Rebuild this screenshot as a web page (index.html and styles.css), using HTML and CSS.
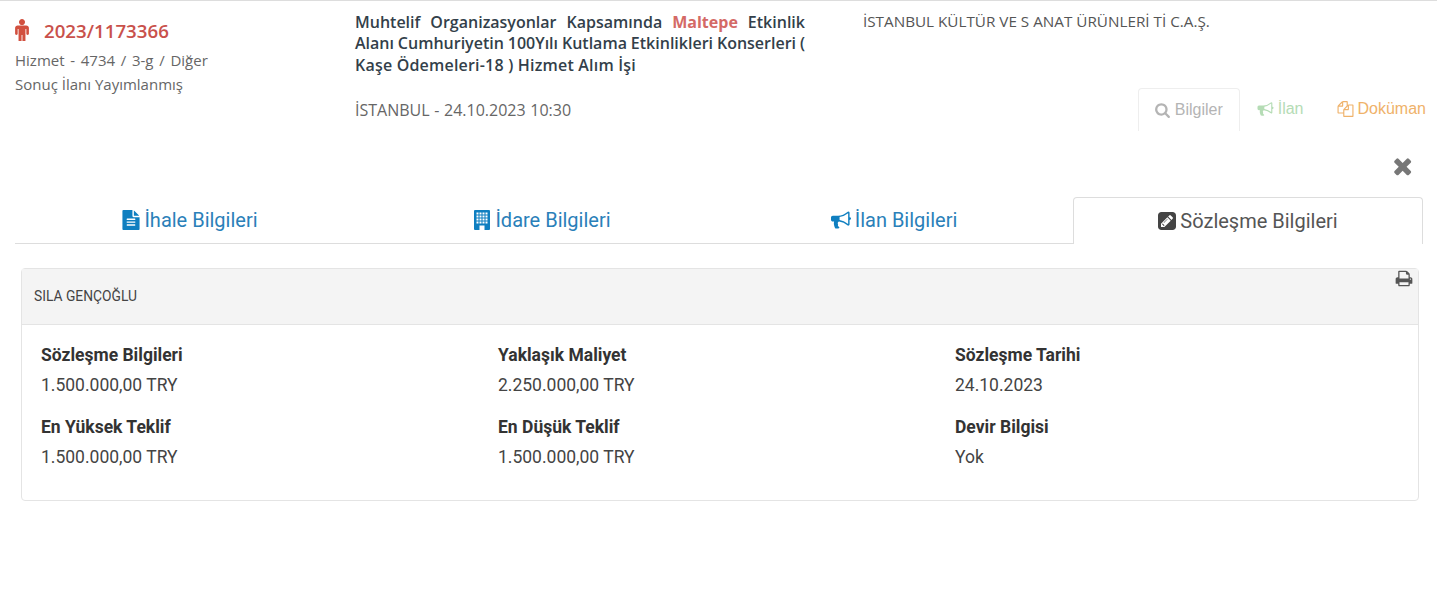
FILE: index.html
```html
<!DOCTYPE html>
<html lang="tr">
<head>
    <meta charset="UTF-8">
    <meta name="viewport" content="width=device-width, initial-scale=1.0">
    <title>Sözleşme Bilgileri</title>
    <link rel="stylesheet" href="styles.css">
</head>
<body>
    <div class="tender-row">
        <div class="tender-id">
            <div class="tender-no">
                <svg class="icon-male" viewBox="0 160 1024 1632"><path fill="currentColor" d="M1024 832v416q0 40-28 68t-68 28-68-28-28-68v-352h-64v912q0 46-33 79t-79 33-79-33-33-79v-464h-64v464q0 46-33 79t-79 33-79-33-33-79v-912h-64v352q0 40-28 68t-68 28-68-28-28-68v-416q0-80 56-136t136-56h640q80 0 136 56t56 136zm-288-448q0 93-65.5 158.5t-158.5 65.5-158.5-65.5-65.5-158.5 65.5-158.5 158.5-65.5 158.5 65.5 65.5 158.5z"/></svg>
                <span>2023/1173366</span>
            </div>
            <div class="tender-meta tender-type">Hizmet - 4734 / 3-g / Diğer</div>
            <div class="tender-meta">Sonuç İlanı Yayımlanmış</div>
        </div>
        <div class="tender-main">
            <p class="tender-title">Muhtelif Organizasyonlar Kapsamında <b>Maltepe</b> Etkinlik <span class="title-tight">Alanı Cumhuriyetin 100Yılı Kutlama Etkinlikleri Konserleri (</span> <span class="title-tail">Kaşe Ödemeleri-18 ) Hizmet Alım İşi</span></p>
            <div class="tender-place">İSTANBUL - 24.10.2023 10:30</div>
        </div>
        <div class="tender-side">
            <div class="tender-org">İSTANBUL KÜLTÜR VE S ANAT ÜRÜNLERİ Tİ C.A.Ş.</div>
            <div class="mini-tabs">
                <a class="mini-tab active">
                    <svg class="icon" viewBox="0 0 1792 1792"><path fill="currentColor" d="M1216 832q0-185-131.5-316.5t-316.5-131.5-316.5 131.5-131.5 316.5 131.5 316.5 316.5 131.5 316.5-131.5 131.5-316.5zm512 832q0 52-38 90t-90 38q-54 0-90-38l-343-342q-179 124-399 124-143 0-273.5-55.5t-225-150-150-225-55.5-273.5 55.5-273.5 150-225 225-150 273.5-55.5 273.5 55.5 225 150 150 225 55.5 273.5q0 220-124 399l343 343q37 37 37 90z"/></svg>
                    Bilgiler
                </a>
                <a class="mini-tab green">
                    <svg class="icon" viewBox="0 0 1792 1792"><path fill="currentColor" d="M1664 640q53 0 90.5 37.5t37.5 90.5-37.5 90.5-90.5 37.5v384q0 52-38 90t-90 38q-417-347-812-380-58 19-91 66t-31 100.5 40 92.5q-20 33-23 65.5t6 58 33.5 55 48 50 61.5 50.5q-29 58-111.5 83t-168.5 11.5-132-55.5q-7-23-29.5-87.5t-32-94.5-23-89-15-101 3.5-98.5 22-110.5h-122q-66 0-113-47t-47-113v-192q0-66 47-113t113-47h480q435 0 896-384 52 0 90 38t38 90v384zm-128 604v-954q-394 302-768 343v270q377 42 768 341z"/></svg>
                    İlan
                </a>
                <a class="mini-tab orange">
                    <svg class="icon" viewBox="0 0 1792 1792"><path fill="currentColor" d="M1696 384q40 0 68 28t28 68v1216q0 40-28 68t-68 28h-960q-40 0-68-28t-28-68v-288h-544q-40 0-68-28t-28-68v-672q0-40 20-88t48-76l408-408q28-28 76-48t88-20h416q40 0 68 28t28 68v328q68-40 128-40h416zm-544 213l-299 299h299v-299zm-640-384l-299 299h299v-299zm196 647l316-316v-416h-384v416q0 40-28 68t-68 28h-416v640h512v-256q0-40 20-88t48-76zm956 804v-1152h-384v416q0 40-28 68t-68 28h-416v640h896z"/></svg>
                    Doküman
                </a>
            </div>
        </div>
    </div>

    <div class="close-row">
        <svg class="icon-close" viewBox="200 200 1300 1400"><path fill="currentColor" d="M1490 1322q0 40-28 68l-136 136q-28 28-68 28t-68-28l-294-294-294 294q-28 28-68 28t-68-28l-136-136q-28-28-28-68t28-68l294-294-294-294q-28-28-28-68t28-68l136-136q28-28 68-28t68 28l294 294 294-294q28-28 68-28t68 28l136 136q28 28 28 68t-28 68l-294 294 294 294q28 28 28 68z"/></svg>
    </div>

    <div class="tabs">
        <a class="tab">
            <svg class="icon" viewBox="128 0 1536 1792"><path fill="currentColor" d="M1596 476q14 14 28 36h-472v-472q22 14 36 28zm-476 164h544v1056q0 40-28 68t-68 28h-1344q-40 0-68-28t-28-68v-1600q0-40 28-68t68-28h800v544q0 40 28 68t68 28zm160 736v-64q0-14-9-23t-23-9h-704q-14 0-23 9t-9 23v64q0 14 9 23t23 9h704q14 0 23-9t9-23zm0-256v-64q0-14-9-23t-23-9h-704q-14 0-23 9t-9 23v64q0 14 9 23t23 9h704q14 0 23-9t9-23zm0-256v-64q0-14-9-23t-23-9h-704q-14 0-23 9t-9 23v64q0 14 9 23t23 9h704q14 0 23-9t9-23z"/></svg>
            İhale Bilgileri
        </a>
        <a class="tab">
            <svg class="icon" viewBox="0 0 16 20">
                <path fill="currentColor" d="M1 0h14a1 1 0 0 1 1 1v18a1 1 0 0 1-1 1H1a1 1 0 0 1-1-1V1a1 1 0 0 1 1-1z"/>
                <path fill="#fff" d="M2.500 2.500h2v2h-2zM5.500 2.500h2v2h-2zM8.500 2.500h2v2h-2zM11.500 2.500h2v2h-2zM2.500 5.500h2v2h-2zM5.500 5.500h2v2h-2zM8.500 5.500h2v2h-2zM11.500 5.500h2v2h-2zM2.500 8.500h2v2h-2zM5.500 8.500h2v2h-2zM8.500 8.500h2v2h-2zM11.500 8.500h2v2h-2zM2.500 11.500h2v2h-2zM5.500 11.500h2v2h-2zM8.500 11.500h2v2h-2zM11.500 11.500h2v2h-2zM5.500 15.500h5v4.500h-5z"/>
            </svg>
            İdare Bilgileri
        </a>
        <a class="tab">
            <svg class="icon icon-wide" viewBox="0 0 1792 1792"><path fill="currentColor" d="M1664 640q53 0 90.5 37.5t37.5 90.5-37.5 90.5-90.5 37.5v384q0 52-38 90t-90 38q-417-347-812-380-58 19-91 66t-31 100.5 40 92.5q-20 33-23 65.5t6 58 33.5 55 48 50 61.5 50.5q-29 58-111.5 83t-168.5 11.5-132-55.5q-7-23-29.5-87.5t-32-94.5-23-89-15-101 3.5-98.5 22-110.5h-122q-66 0-113-47t-47-113v-192q0-66 47-113t113-47h480q435 0 896-384 52 0 90 38t38 90v384zm-128 604v-954q-394 302-768 343v270q377 42 768 341z"/></svg>
            İlan Bilgileri
        </a>
        <a class="tab active">
            <svg class="icon" viewBox="0 0 1536 1536"><path fill="currentColor" d="M404 980l152 152-52 52h-56v-96h-96v-56zm414-390q14 13-3 30l-291 291q-17 17-30 3-14-13 3-30l291-291q17-17 30-3zm-274 690l544-544-288-288-544 544v288h288zm608-608l92-92q28-28 28-68t-28-68l-152-152q-28-28-68-28t-68 28l-92 92zm384-384v960q0 119-84.500 203.500t-203.500 84.500h-960q-119 0-203.500-84.500t-84.500-203.500v-960q0-119 84.500-203.500t203.500-84.500h960q119 0 203.500 84.500t84.500 203.500z"/></svg>
            Sözleşme Bilgileri
        </a>
    </div>

    <div class="card">
        <div class="card-head">
            <span>SILA GENÇOĞLU</span>
            <svg class="icon-print" viewBox="0 128 1792 1536"><path fill="currentColor" d="M448 1536h896v-256h-896v256zm0-640h896v-384h-160q-40 0-68-28t-28-68v-160h-640v640zm1152 64q0-26-19-45t-45-19-45 19-19 45 19 45 45 19 45-19 19-45zm128 0v416q0 13-9.500 22.500t-22.500 9.500h-224v160q0 40-28 68t-68 28h-960q-40 0-68-28t-28-68v-160h-224q-13 0-22.500-9.500t-9.500-22.500v-416q0-79 56.500-135.500t135.500-56.500h64v-544q0-40 28-68t68-28h672q40 0 88 20t76 48l152 152q28 28 48 76t20 88v256h64q79 0 135.500 56.500t56.500 135.500z"/></svg>
        </div>
        <div class="card-body">
            <div class="field"><div class="field-label">Sözleşme Bilgileri</div><div class="field-value">1.500.000,00 TRY</div></div>
            <div class="field"><div class="field-label">Yaklaşık Maliyet</div><div class="field-value">2.250.000,00 TRY</div></div>
            <div class="field"><div class="field-label">Sözleşme Tarihi</div><div class="field-value">24.10.2023</div></div>
            <div class="field"><div class="field-label">En Yüksek Teklif</div><div class="field-value">1.500.000,00 TRY</div></div>
            <div class="field"><div class="field-label">En Düşük Teklif</div><div class="field-value">1.500.000,00 TRY</div></div>
            <div class="field"><div class="field-label">Devir Bilgisi</div><div class="field-value">Yok</div></div>
        </div>
    </div>
</body>
</html>
```

FILE: styles.css
```css
body {
    margin: 0;
    background: #fff;
    font-family: "Open Sans", sans-serif;
    color: #333;
    border-top: 1px solid #ddd;
}
.tender-row {
    display: grid;
    grid-template-columns: 340px 450px 1fr;
    padding: 0 11px 0 15px;
    height: 130px;
}
.tender-no {
    display: flex;
    align-items: center;
    gap: 15px;
    margin-top: 16px;
    height: 26px;
    font-size: 18.7px;
    font-weight: 600;
    color: #c9514b;
}
.icon-male {
    width: 14px;
    height: 22px;
    color: #d2503f;
}
.tender-meta {
    font-size: 15px;
    line-height: 24px;
    color: #666;
}
.tender-type {
    margin-top: 5px;
    word-spacing: 1.8px;
}
.tender-title {
    margin: 10.5px 0 0;
    font-size: 16px;
    font-weight: 600;
    line-height: 21.5px;
    color: #333f4a;
    text-align: justify;
}
.tender-title b {
    font-weight: 700;
    color: #d46a66;
}
.title-tight {
    word-spacing: -1.5px;
}
.title-tail {
    letter-spacing: 0.2px;
}
.tender-place {
    margin-top: 22px;
    font-size: 16px;
    line-height: 24px;
    word-spacing: 0.5px;
    color: #666;
}
.tender-side {
    padding-left: 58px;
    display: flex;
    flex-direction: column;
}
.tender-org {
    margin-top: 10px;
    font-size: 15.25px;
    line-height: 20px;
    color: #555;
}
.mini-tabs {
    display: flex;
    justify-content: flex-end;
    margin-top: 57px;
    font-family: "Liberation Sans", sans-serif;
    font-size: 16px;
}
.mini-tab {
    display: flex;
    align-items: center;
    gap: 4px;
    height: 42px;
    padding: 0 16px;
}
.mini-tab.active {
    border: 1px solid #eee;
    border-bottom: none;
    border-radius: 4px 4px 0 0;
    padding-left: 15px;
    color: #b4b4b4;
}
.mini-tab.green {
    color: #b5dcb5;
    padding: 0 17px;
}
.mini-tab.orange {
    color: #efb26a;
    padding: 0 0 0 16px;
}
.icon {
    width: 17px;
    height: 16px;
    flex: none;
}
.close-row {
    display: flex;
    justify-content: flex-end;
    padding: 25px 25px 0 0;
    height: 41px;
}
.icon-close {
    width: 20px;
    height: 20px;
    color: #777;
}
.tabs {
    display: grid;
    grid-template-columns: repeat(4, 1fr);
    margin: 0 14px 0 15px;
    height: 46px;
    border-bottom: 1px solid #ddd;
    font-family: Roboto, sans-serif;
    font-size: 20px;
}
.tab {
    display: flex;
    align-items: center;
    justify-content: center;
    gap: 4px;
    height: 46px;
    padding-right: 2px;
    color: #2a80b9;
}
.tab .icon {
    width: 18px;
    height: 20px;
    color: #0f7fc0;
}
.tab .icon-wide {
    width: 20px;
}
.tab.active {
    box-sizing: border-box;
    height: 47px;
    border: 1px solid #ddd;
    border-bottom: none;
    border-radius: 4px 4px 0 0;
    background: #fff;
    color: #555;
    margin-left: 2px;
    padding-right: 0;
}
.tab.active .icon {
    color: #444;
}
.card {
    margin: 24px 18px 0 21px;
    border: 1px solid #e4e4e4;
    border-radius: 4px;
    font-family: Roboto, sans-serif;
}
.card-head {
    position: relative;
    display: flex;
    align-items: center;
    box-sizing: border-box;
    height: 56px;
    padding: 0 0 1px 12px;
    background: #f4f4f4;
    border-bottom: 1px solid #e4e4e4;
    font-size: 13.8px;
    color: #444;
}
.icon-print {
    position: absolute;
    top: 1px;
    right: 5px;
    width: 18px;
    height: 17px;
    color: #555;
}
.card-body {
    display: grid;
    grid-template-columns: repeat(3, 457px);
    row-gap: 11px;
    padding: 15px 19px 28px;
    font-size: 17.5px;
}
.field-label {
    font-weight: 700;
    line-height: 30px;
    color: #333;
}
.field-value {
    line-height: 30.5px;
    color: #444;
}
```
